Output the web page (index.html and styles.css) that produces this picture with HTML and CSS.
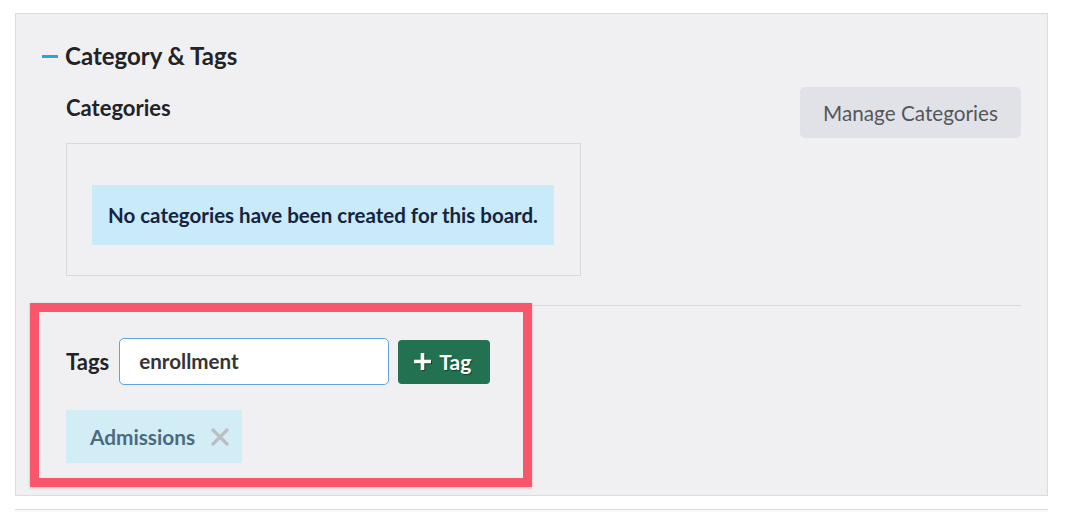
FILE: index.html
```html
<!DOCTYPE html>
<html>
<head>
<meta charset="utf-8">
<link rel="stylesheet" href="styles.css">
</head>
<body>
<div class="panel">
  <div class="heading"><span class="dash"></span><span class="heading-text">Category &amp; Tags</span></div>
  <div class="body">
    <div class="cat-row">
      <div class="cat-left">
        <div class="cat-title">Categories</div>
        <div class="cat-box">
          <div class="alert">No categories have been created for this board.</div>
        </div>
      </div>
      <button class="manage-btn">Manage Categories</button>
    </div>
    <div class="rule"></div>
    <div class="tags-row">
      <span class="tags-label">Tags</span>
      <div class="tag-input">enrollment</div>
      <button class="add-btn"><svg class="plus" width="19" height="19" viewBox="0 0 19 19"><path d="M9.5 1v17M1 9.5h17" stroke="#fff" stroke-width="3.6" fill="none"/></svg><span>Tag</span></button>
    </div>
    <div class="chips">
      <span class="chip">Admissions<svg class="x" width="20" height="20" viewBox="0 0 20 20"><path d="M2 2L18 18M18 2L2 18" stroke="#bcbfc1" stroke-width="3.2" fill="none"/></svg></span>
    </div>
  </div>
  <div class="highlight"></div>
</div>
<div class="panel2"></div>
</body>
</html>
```

FILE: styles.css
```css
html, body {
  margin: 0;
  padding: 0;
  background: #ffffff;
  font-family: Lato, "Open Sans", sans-serif;
}
.panel {
  position: relative;
  margin: 13px 18px 0 15px;
  border: 1px solid #dcdcdf;
  background: #f0f0f3;
  padding: 26px 26px 32px 26px;
}
.heading {
  display: flex;
  align-items: center;
  height: 30px;
}
.dash {
  display: inline-block;
  width: 16px;
  height: 3px;
  background: #2ea3d6;
  margin-right: 7px;
  margin-top: 2px;
}
.heading-text {
  font-size: 24px;
  font-weight: 700;
  color: #222326;
}
.body {
  padding-left: 24px;
}
.cat-row {
  display: flex;
  justify-content: space-between;
  align-items: flex-start;
  margin-top: 17px;
}
.cat-title {
  margin-top: 7px;
  height: 28px;
  line-height: 28px;
  font-size: 22px;
  font-weight: 700;
  color: #222326;
}
.cat-box {
  margin-top: 21px;
  width: 515px;
  border: 1px solid #d8d8dc;
  padding: 41px 0 0 25px;
  box-sizing: border-box;
  height: 133px;
}
.alert {
  display: inline-block;
  background: #c8eaf9;
  color: #15233f;
  font-size: 20.5px;
  font-weight: 700;
  height: 60px;
  line-height: 60px;
  padding: 0 16px;
}
.manage-btn {
  border: none;
  background: #e1e2e7;
  border-radius: 5px;
  width: 221px;
  height: 51px;
  font-family: Lato, "Open Sans", sans-serif;
  font-size: 20.7px;
  color: #555659;
  padding: 0;
}
.rule {
  margin-top: 29px;
  height: 1px;
  background: #dadadd;
}
.tags-row {
  display: flex;
  align-items: center;
  margin-top: 32px;
}
.tags-label {
  font-size: 22px;
  font-weight: 700;
  color: #222326;
  margin-right: 10px;
}
.tag-input {
  box-sizing: border-box;
  width: 270px;
  height: 47px;
  border: 1px solid #5fa3da;
  border-radius: 5px;
  background: #ffffff;
  padding-left: 19px;
  line-height: 45px;
  font-size: 20.6px;
  font-weight: 700;
  color: #333438;
}
.add-btn {
  display: flex;
  align-items: center;
  justify-content: flex-start;
  margin-left: 9px;
  width: 92px;
  height: 44px;
  border: none;
  border-radius: 4px;
  background: #227150;
  color: #ffffff;
  font-family: Lato, "Open Sans", sans-serif;
  font-size: 21px;
  font-weight: 700;
  padding: 0 0 0 15px;
  text-shadow: 1px 1px 1px rgba(0,0,0,0.45);
}
.plus {
  margin-right: 7px;
  filter: drop-shadow(1px 1px 0.5px rgba(0,0,0,0.45));
}
.chips {
  margin-top: 25px;
}
.chip {
  display: inline-flex;
  align-items: center;
  height: 53px;
  background: #d3edf7;
  padding: 0 12px 0 24px;
  font-size: 20.8px;
  font-weight: 700;
  color: #4a6b7f;
}
.x {
  margin-left: 15px;
}
.highlight {
  position: absolute;
  left: 14px;
  top: 289px;
  width: 484px;
  height: 166px;
  border: 9px solid #f8566b;
  box-shadow: 0 1px 3px rgba(0,0,0,0.2);
  pointer-events: none;
}
.panel2 {
  margin: 13px 18px 0 15px;
  border-top: 1px solid #dcdcdf;
  height: 20px;
  background: #fafafa;
}
```
